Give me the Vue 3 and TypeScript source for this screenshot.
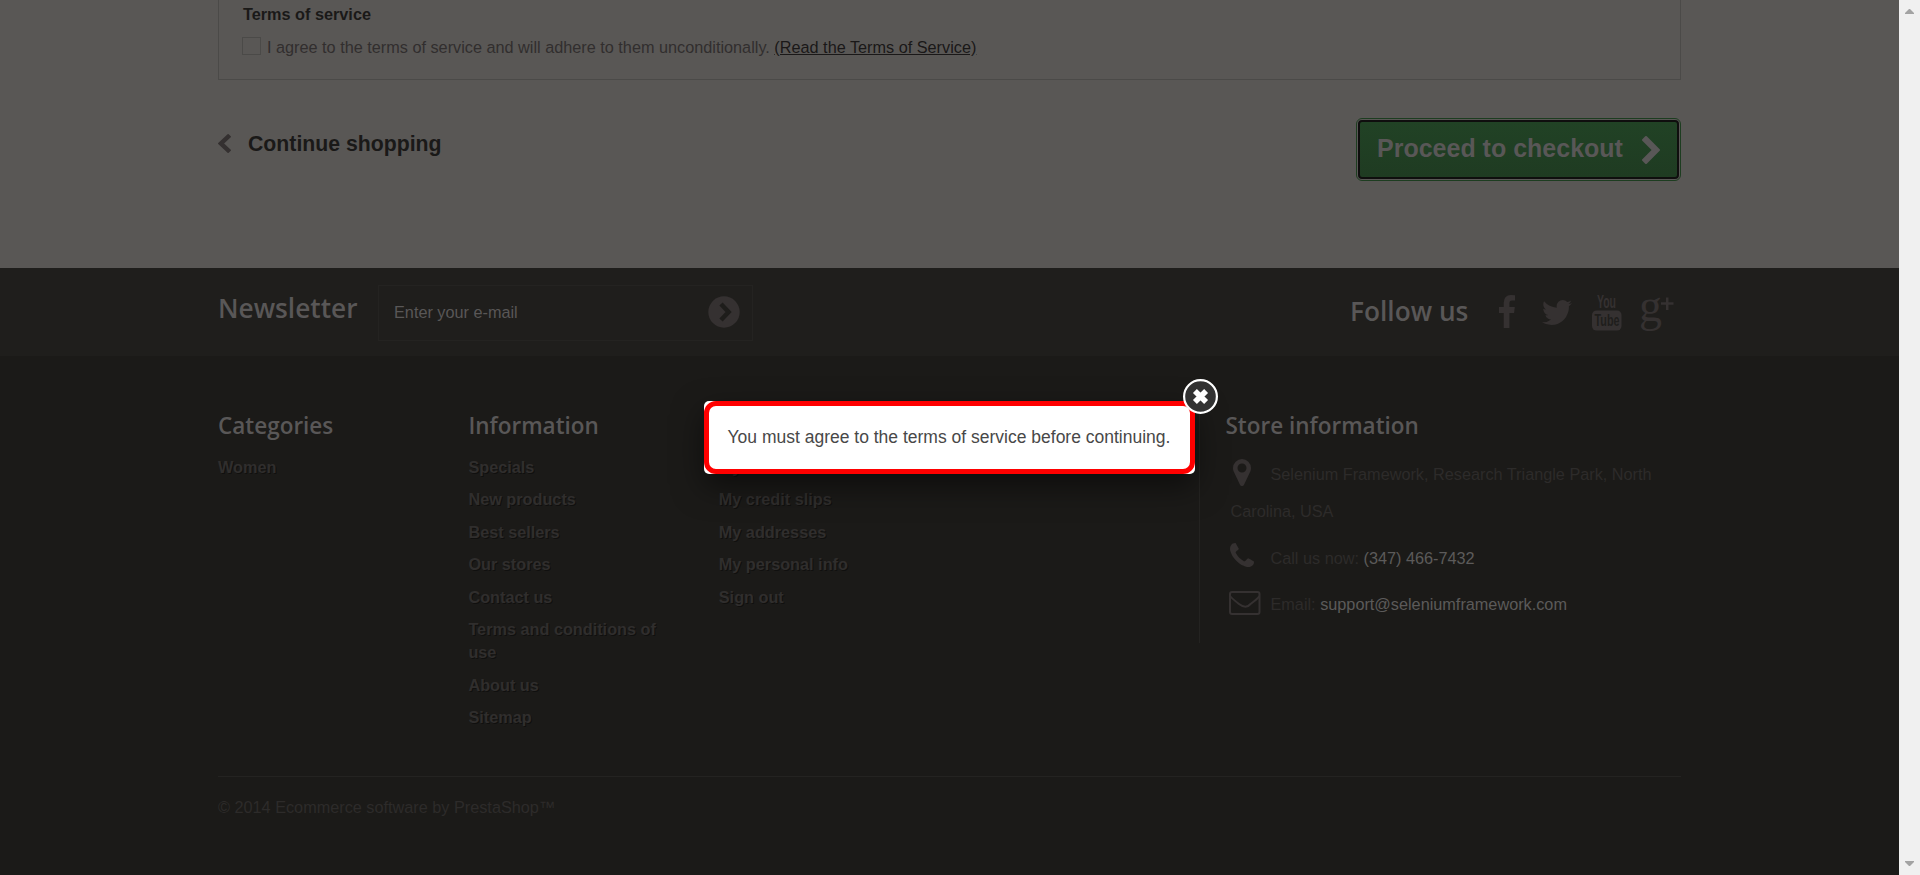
<script setup lang="ts">
interface LinkColumn {
  title: string
  links: string[]
}

const columns: LinkColumn[] = [
  { title: 'Categories', links: ['Women'] },
  {
    title: 'Information',
    links: [
      'Specials',
      'New products',
      'Best sellers',
      'Our stores',
      'Contact us',
      'Terms and conditions of use',
      'About us',
      'Sitemap',
    ],
  },
  {
    title: 'My account',
    links: ['My orders', 'My credit slips', 'My addresses', 'My personal info', 'Sign out'],
  },
]

const chevron =
  'M1363 877l-742 742q-19 19-45 19t-45-19l-166-166q-19-19-19-45t19-45l531-531-531-531q-19-19-19-45t19-45l166-166q19-19 45-19t45 19l742 742q19 19 19 45t-19 45z'
</script>

<template>
  <div class="window">
    <div class="page">
      <main class="order">
        <section class="terms">
          <h3>Terms of service</h3>
          <div class="agree">
            <span class="checkbox"></span>
            <span>I agree to the terms of service and will adhere to them unconditionally. <a>(Read the Terms of Service)</a></span>
          </div>
        </section>
        <div class="actions">
          <a class="continue">
            <svg class="chev-left" viewBox="346 26 1036 1612" preserveAspectRatio="none"><path :d="chevron" /></svg>
            <span>Continue shopping</span>
          </a>
          <button class="checkout" type="button">
            <span>Proceed to checkout</span>
            <svg class="chev-right" viewBox="346 26 1036 1612" preserveAspectRatio="none"><path :d="chevron" /></svg>
          </button>
        </div>
      </main>

      <section class="band">
        <h4 class="news-title">Newsletter</h4>
        <div class="field">
          <span>Enter your e-mail</span>
          <svg class="go" viewBox="0 0 32 32">
            <circle cx="16" cy="16" r="15.7" />
            <path d="M13 8l7.6 8-7.6 8" />
          </svg>
        </div>
        <h4 class="follow">Follow us</h4>
        <div class="social">
          <svg class="fb" viewBox="479 0 864 1664" preserveAspectRatio="none">
            <path d="M1343 12v264h-157q-86 0-116 36t-30 108v189h293l-39 296h-254v759h-306v-759h-255v-296h255v-218q0-186 104-288.5t277-102.5q147 0 228 12z" />
          </svg>
          <svg class="tw" viewBox="108 256 1576 1280" preserveAspectRatio="none">
            <path d="M1684 408q-67 98-162 167 1 14 1 42 0 130-38 259.5t-115.5 248.5-184.5 210.5-258 146-323 54.5q-271 0-496-145 35 4 78 4 225 0 401-138-105-2-188-64.5t-114-159.5q33 5 61 5 43 0 85-11-112-23-185.5-111.5t-73.5-205.5v-4q68 38 146 41-66-44-105-115t-39-154q0-88 44-163 121 149 294.5 238.5t371.5 99.5q-8-38-8-74 0-134 94.5-228.5t228.5-94.5q140 0 236 102 109-21 205-78-37 115-142 178 93-10 186-50z" />
          </svg>
          <svg class="yt" viewBox="0 0 30 36">
            <text x="5" y="13.2" font-size="17.5" textLength="19" lengthAdjust="spacingAndGlyphs">You</text>
            <rect x="0" y="15.5" width="29.5" height="20" rx="4.5" />
            <text class="cut" x="2.5" y="31.4" font-size="17" textLength="25" lengthAdjust="spacingAndGlyphs">Tube</text>
          </svg>
          <svg class="gp" viewBox="0 0 35 36">
            <text x="-1" y="24.5" font-size="46" textLength="23" lengthAdjust="spacingAndGlyphs">g</text>
            <path d="M21 7.5h12.5M27.2 1.5v12.5" />
          </svg>
        </div>
      </section>

      <footer class="footer">
        <div class="columns">
          <nav v-for="column in columns" :key="column.title" class="column">
            <h4>{{ column.title }}</h4>
            <ul>
              <li v-for="link in column.links" :key="link">{{ link }}</li>
            </ul>
          </nav>
          <section class="store">
            <h4>Store information</h4>
            <div class="row address">
              <span class="icon">
                <svg class="pin" viewBox="384 128 1024 1536" preserveAspectRatio="none"><path d="M1152 640q0-106-75-181t-181-75-181 75-75 181 75 181 181 75 181-75 75-181zm256 0q0 109-33 179l-364 774q-16 33-47.5 52t-67.5 19-67.5-19-46.5-52l-365-774q-33-70-33-179 0-212 150-362t362-150 362 150 150 362z" /></svg>
              </span>
              <span>Selenium Framework, Research Triangle Park, North</span>
            </div>
            <div class="row wrapped">Carolina, USA</div>
            <div class="row phone-row">
              <span class="icon">
                <svg class="phone" viewBox="192 128 1408 1408"><path d="M1600 1240q0 27-10 70.5t-21 68.5q-21 50-122 106-94 51-186 51-27 0-53-3.5t-57.5-12.5-47-14.5-55.5-20.5-49-18q-98-35-175-83-127-79-264-216t-216-264q-48-77-83-175-3-9-18-49t-20.5-55.5-14.5-47-12.5-57.5-3.5-53q0-92 51-186 56-101 106-122 25-11 68.5-21t70.5-10q14 0 21 3 18 6 53 76 11 19 30 54t35 63.5 31 53.5q3 4 17.5 25t21.5 35.5 7 28.5q0 20-28.5 50t-62 55-62 53-28.5 46q0 9 5 22.5t8.5 20.5 14 24 11.5 19q76 137 174 235t235 174q2 1 19 11.5t24 14 20.5 8.5 22.5 5q18 0 46-28.5t53-62 55-62 50-28.5q14 0 28.5 7t35.5 21.5 25 17.5q25 15 53.5 31t63.5 35 54 30q70 35 76 53 3 7 3 21z" /></svg>
              </span>
              <span>Call us now: <b>(347) 466-7432</b></span>
            </div>
            <div class="row mail-row">
              <span class="icon">
                <svg class="mail" viewBox="0 0 32 24"><rect x="1" y="1" width="29.5" height="22" rx="2" /><path d="M1 5q2 2.500 9 8t11.500 0Q28.500 8 30.500 5" /></svg>
              </span>
              <span>Email: <b>support@seleniumframework.com</b></span>
            </div>
          </section>
        </div>
        <p class="copyright">© 2014 Ecommerce software by PrestaShop™</p>
      </footer>

      <div class="dialog" role="alertdialog">
        <p>You must agree to the terms of service before continuing.</p>
        <svg class="close" viewBox="0 0 35 35">
          <circle cx="17.500" cy="17.500" r="16.400" />
          <path d="M11.900 12.100l11.200 11M23.100 12.100l-11.200 11" />
        </svg>
      </div>
    </div>
    <div class="scrollbar">
      <svg viewBox="0 0 9 5"><path d="M0 5V4L4 0h1l4 4v1z" /></svg>
      <svg viewBox="0 0 9 5"><path d="M0 0v1l4 4h1l4-4V0z" /></svg>
    </div>
  </div>
</template>

<style>
body {
  margin: 0;
  overflow: hidden;
}
</style>

<style scoped>
.window {
  display: flex;
  width: 1920px;
  height: 875px;
  overflow: hidden;
  font-family: "Liberation Sans", Arial, sans-serif;
  font-size: 16.25px;
  line-height: 22px;
}
h3, h4, p, ul {
  margin: 0;
  padding: 0;
}
svg {
  display: block;
  flex: none;
}
.page {
  position: relative;
  display: flex;
  flex-direction: column;
  width: 1899px;
  height: 875px;
}
.order {
  box-sizing: border-box;
  height: 268px;
  padding: 0 218px;
  background: #595755;
}
.terms {
  box-sizing: border-box;
  height: 80px;
  padding: 3px 0 0 23px;
  border: 1px solid #4b4a48;
  border-top: 0;
  color: #312e2e;
}
.terms h3 {
  padding-left: 1px;
  font-size: 16.25px;
  line-height: 22px;
  color: #1a1918;
}
.agree {
  display: flex;
  align-items: center;
  gap: 6px;
  height: 22px;
  margin-top: 11px;
  white-space: nowrap;
}
.checkbox {
  box-sizing: border-box;
  width: 19px;
  height: 18px;
  margin-top: -2px;
  border: 1px solid #4b4a48;
}
.agree a {
  color: #1a1818;
  text-decoration: underline;
}
.actions {
  display: flex;
  justify-content: space-between;
  align-items: flex-start;
  padding-top: 38px;
}
.continue {
  display: flex;
  align-items: center;
  gap: 17px;
  height: 30px;
  margin-top: 11px;
  font-size: 21.25px;
  font-weight: bold;
  color: #1a1918;
}
.chev-left {
  width: 13px;
  height: 19px;
  margin-top: -2px;
  transform: scaleX(-1);
  fill: #343030;
}
.chev-right {
  width: 18px;
  height: 28px;
  margin-top: 1px;
  fill: #595757;
}
.checkout {
  display: flex;
  align-items: center;
  gap: 19px;
  box-sizing: border-box;
  width: 321px;
  height: 59px;
  margin: 2px 2px 0 0;
  padding: 0 0 0 17px;
  border: 2px solid #0f0e0e;
  border-radius: 4px;
  outline: 1px solid #1d3d20;
  outline-offset: 1px;
  background: linear-gradient(#214225, #1f3b22);
  font: bold 25px/30px "Liberation Sans", Arial, sans-serif;
  color: #595757;
}
.checkout span {
  margin-top: -3px;
  white-space: nowrap;
}
.band {
  display: flex;
  align-items: flex-start;
  box-sizing: border-box;
  height: 88px;
  padding: 17px 218px 0;
  background: #1f1e1c;
}
.band h4 {
  font: 600 26.25px/36px "Open Sans", sans-serif;
  color: #595757;
  white-space: nowrap;
}
.news-title {
  width: 160px;
  margin-top: 5px;
}
.field {
  display: flex;
  justify-content: space-between;
  align-items: center;
  box-sizing: border-box;
  width: 375px;
  height: 56px;
  padding: 0 12px 2px 15px;
  border: 1px solid #242321;
  color: #595757;
}
.go {
  width: 32px;
  height: 32px;
  fill: #353131;
}
.go path {
  fill: none;
  stroke: #1e1d1b;
  stroke-width: 4.5;
}
.band .follow {
  margin: 8px 0 0 597px;
}
.social {
  display: flex;
  align-items: flex-start;
  flex: 1;
  margin-top: 10px;
  fill: #353131;
}
.fb {
  width: 16px;
  height: 33px;
  margin-left: 31px;
}
.tw {
  width: 30px;
  height: 25px;
  margin: 5px 0 0 27px;
}
.yt {
  width: 30px;
  height: 36px;
  margin-left: 20px;
  overflow: visible;
  font-family: "Liberation Sans", sans-serif;
  font-weight: bold;
}
.cut {
  fill: #1f1e1c;
}
.gp {
  width: 35px;
  height: 36px;
  margin: 1px 0 0 18px;
  overflow: visible;
  font-family: "Liberation Serif", serif;
}
.gp path {
  fill: none;
  stroke: #353131;
  stroke-width: 2.5;
}
.footer {
  flex: 1;
  padding: 0 218px;
  background: #1b1a18;
  color: #2d2b2a;
}
.columns {
  display: flex;
  height: 420px;
}
.column {
  width: 250.4px;
}
.column h4, .store h4 {
  font: 600 22.5px/28px "Open Sans", sans-serif;
  color: #595757;
  white-space: nowrap;
}
.column h4 {
  padding-top: 56px;
}
.column ul {
  width: 200px;
  margin-top: 15.5px;
  list-style: none;
  font-weight: bold;
}
.column li {
  margin-bottom: 9.5px;
  line-height: 23px;
  color: #302e2d;
  text-shadow: 1px 1px 0 rgba(0, 0, 0, 0.4);
}
.store {
  box-sizing: border-box;
  width: 482px;
  height: 233px;
  margin: 54px 0 0 229.8px;
  padding: 2px 0 0 25.5px;
  border-left: 1px solid #242321;
}
.row {
  display: flex;
  align-items: center;
  height: 38px;
  padding-left: 5px;
  white-space: nowrap;
}
.row b {
  font-weight: normal;
  color: #5c5a5a;
}
.icon {
  display: flex;
  align-items: center;
  width: 40px;
  height: 38px;
  fill: #353131;
}
.address {
  margin-top: 15px;
}
.wrapped {
  margin-top: -1px;
}
.phone-row {
  margin-top: 9px;
}
.mail-row {
  margin-top: 8px;
}
.pin {
  width: 18px;
  height: 27px;
  margin: -4px 0 0 3px;
}
.phone {
  width: 24px;
  height: 24px;
  margin-top: -7px;
}
.mail {
  width: 32px;
  height: 24px;
  margin: -3px 0 0 -1px;
  fill: none;
  stroke: #353131;
  stroke-width: 2;
}
.copyright {
  padding-top: 19px;
  border-top: 1px solid #242321;
}
.dialog {
  position: absolute;
  top: 401px;
  left: 704px;
  width: 491px;
  height: 73px;
  border-radius: 5px;
  background: #fff;
  box-shadow: 0 12px 31px rgba(0, 0, 0, 0.5);
}
.dialog p {
  box-sizing: border-box;
  height: 73px;
  padding: 20px 0 0 18.5px;
  border: 5px solid #f00;
  border-radius: 12px;
  font-size: 17.5px;
  line-height: 22px;
  color: #484848;
  white-space: nowrap;
}
.close {
  position: absolute;
  top: -22px;
  right: -23px;
  width: 35px;
  height: 35px;
  fill: #323232;
  stroke: #fff;
  stroke-width: 2.2;
}
.close path {
  stroke-width: 5.6;
}
.scrollbar {
  display: flex;
  flex-direction: column;
  justify-content: space-between;
  box-sizing: border-box;
  width: 21px;
  height: 875px;
  padding: 9px 6px;
  background: #f0f0f0;
  fill: #a3a3a3;
}
.scrollbar svg {
  width: 9px;
  height: 5px;
}
</style>
